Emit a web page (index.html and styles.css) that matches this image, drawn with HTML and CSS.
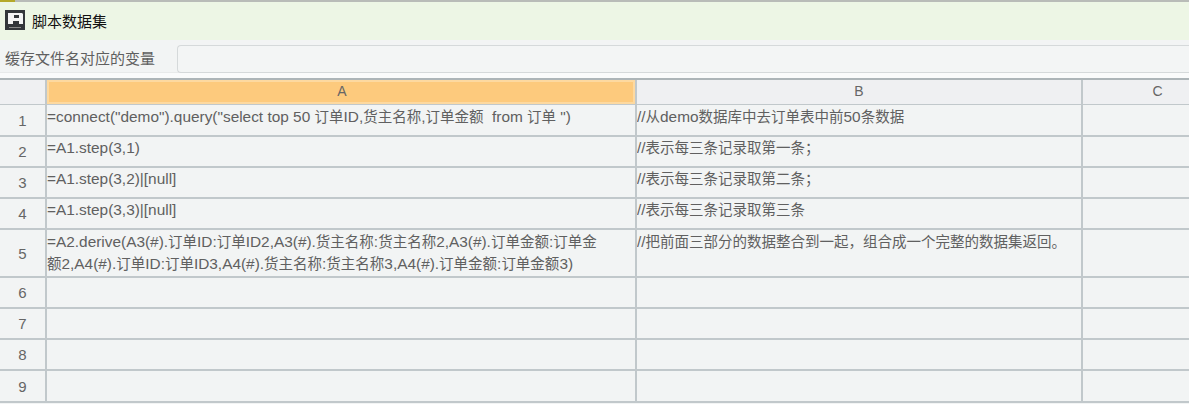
FILE: index.html
```html
<!DOCTYPE html>
<html lang="zh">
<head>
<meta charset="utf-8">
<title>脚本数据集</title>
<link rel="stylesheet" href="styles.css">
</head>
<body>
<div class="topline"><span class="topmark"></span></div>
<header class="titlebar">
  <svg class="logo" width="20" height="20" viewBox="0 0 20 20">
    <rect width="20" height="20" fill="#33363a"/>
    <path d="M3 3h14l1 1v10h-4v-3H8v3H3z M9 5v3h5V5z" fill="#f4f4f4" fill-rule="evenodd"/>
    <rect x="4" y="17" width="12" height="1" fill="#888"/>
  </svg>
  <span class="title">脚本数据集</span>
</header>
<div class="toolbar">
  <label class="label">缓存文件名对应的变量</label>
  <div class="input"></div>
</div>
<div class="sheet">
  <div class="corner"></div>
  <div class="colhead selected">A</div>
  <div class="colhead">B</div>
  <div class="colhead">C</div>

  <div class="rowhead">1</div>
  <div class="cell shift">=connect("demo").query("select top 50 <span class="zh">订单</span>ID,<span class="zh">货主名称</span>,<span class="zh">订单金额</span>&nbsp; from <span class="zh">订单</span> ")</div>
  <div class="cell shift">//<span class="zh">从</span>demo<span class="zh">数据库中去订单表中前</span>50<span class="zh">条数据</span></div>
  <div class="cell"></div>

  <div class="rowhead">2</div>
  <div class="cell">=A1.step(3,1)</div>
  <div class="cell">//<span class="zh">表示每三条记录取第一条；</span></div>
  <div class="cell"></div>

  <div class="rowhead">3</div>
  <div class="cell">=A1.step(3,2)|[null]</div>
  <div class="cell">//<span class="zh">表示每三条记录取第二条；</span></div>
  <div class="cell"></div>

  <div class="rowhead">4</div>
  <div class="cell">=A1.step(3,3)|[null]</div>
  <div class="cell">//<span class="zh">表示每三条记录取第三条</span></div>
  <div class="cell"></div>

  <div class="rowhead">5</div>
  <div class="cell shift">=A2.derive(A3(#).<span class="zh">订单</span>ID:<span class="zh">订单</span>ID2,A3(#).<span class="zh">货主名称</span>:<span class="zh">货主名称</span>2,A3(#).<span class="zh">订单金额</span>:<span class="zh">订单金</span><br><span class="zh">额</span>2,A4(#).<span class="zh">订单</span>ID:<span class="zh">订单</span>ID3,A4(#).<span class="zh">货主名称</span>:<span class="zh">货主名称</span>3,A4(#).<span class="zh">订单金额</span>:<span class="zh">订单金额</span>3)</div>
  <div class="cell shift">//<span class="zh">把前面三部分的数据整合到一起，组合成一个完整的数据集返回。</span></div>
  <div class="cell"></div>

  <div class="rowhead">6</div><div class="cell"></div><div class="cell"></div><div class="cell"></div>
  <div class="rowhead">7</div><div class="cell"></div><div class="cell"></div><div class="cell"></div>
  <div class="rowhead">8</div><div class="cell"></div><div class="cell"></div><div class="cell"></div>
  <div class="rowhead">9</div><div class="cell"></div><div class="cell"></div><div class="cell"></div>
</div>
</body>
</html>
```
FILE: styles.css
```css
* { box-sizing: border-box; }
html, body { margin: 0; height: 404px; overflow: hidden; }
body {
  background: #f2f4f4;
  font-family: "Liberation Sans", "Noto Sans CJK SC", sans-serif;
  font-size: 15px;
  color: #555;
}
.topline {
  height: 2px;
  background: #b9bcb8;
  display: flex;
}
.topmark { width: 15px; background: #b5a92a; }
.titlebar {
  height: 38px;
  background: #edf6e5;
  display: flex;
  align-items: center;
  padding: 0 0 2px 5px;
  gap: 7px;
}
.logo { display: block; }
.title { color: #111; font-size: 15px; }
.toolbar {
  height: 38px;
  display: flex;
  align-items: flex-start;
  padding: 5px 0 0 5px;
  gap: 21px;
  border-bottom: 5px solid #fafbfb;
  box-shadow: inset 0 -1px 0 #e8eaea;
}
.label { line-height: 28px; color: #5f5f5f; font-size: 15px; width: 151px; white-space: nowrap; }
.input {
  flex: 1;
  height: 28px;
  background: #f3f5f5;
  border: 1px solid #d5d9da;
  border-right: 0;
  border-radius: 4px 0 0 4px;
}
.sheet {
  display: grid;
  grid-template-columns: 47px 590px 446px 151px;
  grid-template-rows: 25px 32px 31px 31px 31px 48px 31px 31px 31px 32px;
  border-top: 2px solid #adb5b8;
}
.corner, .colhead, .rowhead, .cell {
  border-right: 2px solid #c1c8cb;
  border-bottom: 2px solid #c1c8cb;
}
.corner, .colhead { background: #eff0f2; }
.colhead {
  text-align: center;
  line-height: 22px;
  font-size: 14px;
  color: #666;
  border-bottom-width: 1px;
}
.corner { border-bottom-width: 1px; }
.colhead.selected {
  background: #fdca7d;
  box-shadow: inset 0 0 0 2px #fdd9a0;
  padding-left: 2px;
}
.rowhead {
  display: flex;
  align-items: center;
  justify-content: center;
  font-size: 15px;
  color: #666;
  background: #f2f4f4;
}
.cell {
  line-height: 22px;
  font-size: 15.4px;
  color: #606060;
  overflow: hidden;
  white-space: nowrap;
}
.shift { padding-top: 1px; }
.zh { font-size: 14.5px; }
.colhead:last-child, .cell:nth-child(4n) { border-right: 0; }
```
